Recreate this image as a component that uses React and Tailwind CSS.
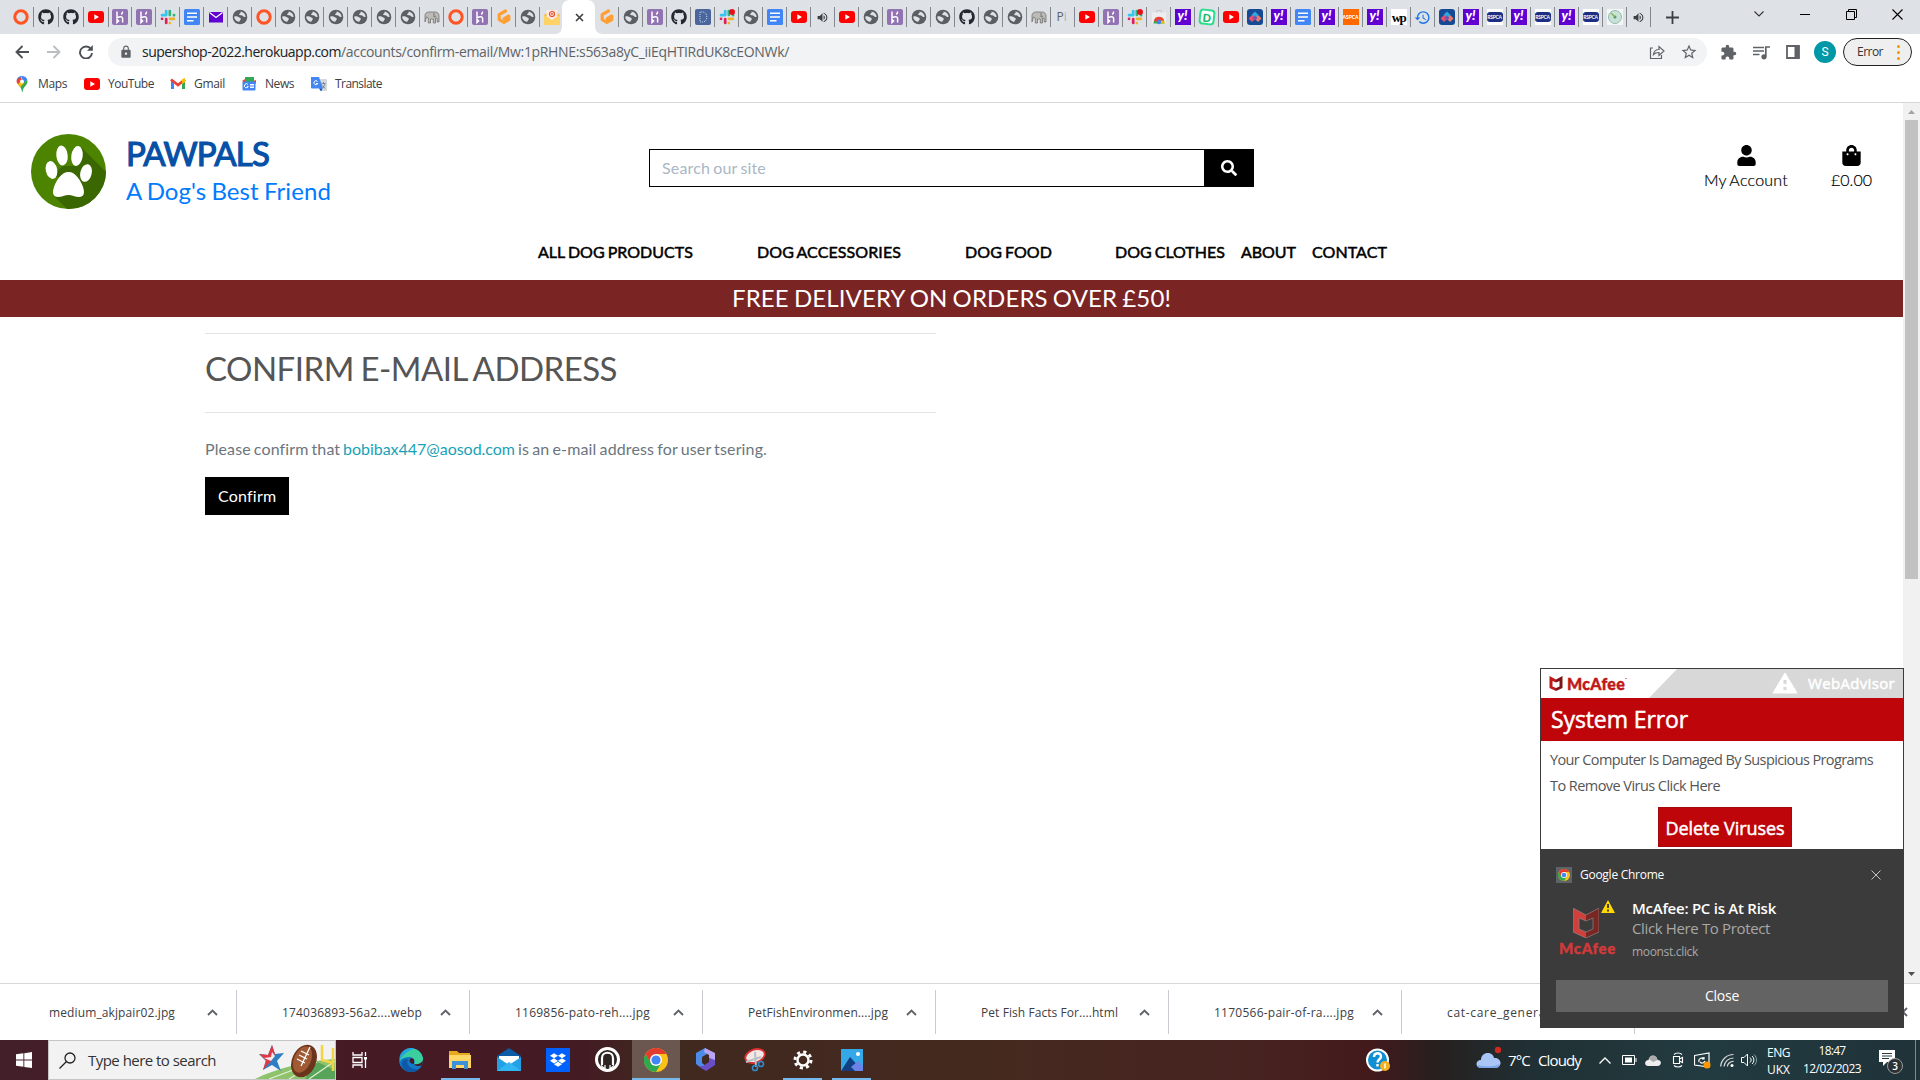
import React, { useLayoutEffect, useRef, useState } from "react";
import { FaGithub, FaUser, FaShoppingBag, FaSearch, FaDropbox } from "react-icons/fa";
import { MdLock, MdExtension, MdStarBorder, MdVolumeUp, MdHistory } from "react-icons/md";

/* Text spread over a fixed width by adjusting its letter spacing. */
function Fit({ w, className = "", children }) {
  const ref = useRef(null);
  const [ls, setLs] = useState(0);
  useLayoutEffect(() => {
    const natural = ref.current.getBoundingClientRect().width;
    setLs((w - natural) / ref.current.textContent.length);
  }, [w]);
  return (
    <span className={"block shrink-0 whitespace-nowrap " + className} style={{ width: w }}>
      <span ref={ref} style={{ letterSpacing: ls }}>{children}</span>
    </span>
  );
}

const Svg = ({ s = 16, w, h, vb = "0 0 16 16", className = "", children }) => (
  <svg width={w || s} height={h || s} viewBox={vb} fill="none" className={"shrink-0 " + className}>{children}</svg>
);

/* ---------- Favicons ---------- */
const Ring = () => <Svg><circle cx="8" cy="8" r="6.200" stroke="#ff5423" strokeWidth="3" /></Svg>;
const Git = () => <FaGithub size={16} color="#24292f" />;
const Tube = () => <Svg><rect x="0" y="2" width="16" height="12" rx="3" fill="#f00" /><path d="M6.3 5.3v5.4L11 8z" fill="#fff" /></Svg>;
const Heroku = () => (
  <Svg><rect width="16" height="16" rx="2" fill="#9173b4" /><path d="M5 2.500v6.200c3-1.300 5.600-1.400 5.600.6v4.200M5 10.600v3l1.600-1.500zM10.600 2.500c0 1.300-.5 2.200-1.300 3" stroke="#fff" strokeWidth="1.500" /></Svg>
);
const Slack = ({ dot }) => (
  <Svg>
    <g strokeWidth="2.700" strokeLinecap="round">
      <path d="M6.200 2v4M2 6.200h4" stroke="#36c5f0" /><path d="M9.800 2v4M14 6.200h.1" stroke="#2eb67d" />
      <path d="M10 9.800h4M9.800 14v.1" stroke="#ecb22e" /><path d="M6.200 10v4M2 9.800h.1" stroke="#e01e5a" />
    </g>
    {dot && <circle cx="13" cy="3" r="3" fill="#e8101c" />}
  </Svg>
);
const Doc = () => <Svg><rect width="16" height="16" rx="1.500" fill="#4285f4" /><path d="M3 4.200h10M3 8h10M3 11.800h6.500" stroke="#fff" strokeWidth="1.500" /></Svg>;
const Mail = () => <Svg><rect x="1" y="3" width="14" height="10.500" fill="#5f01d1" /><path d="M1.500 3.500 8 8.500l6.500-5" stroke="#fff" strokeWidth="1.300" /></Svg>;
const Globe = () => (
  <Svg>
    <circle cx="8" cy="8" r="7.300" fill="#5b5f64" />
    <path d="M2.300 7.600c1.500-.6 3.300-.4 4.200.4.800.8 2.300.6 2.300 2 0 1.300-1.300 1.300-1.600 2.900C4.500 12.500 2 10.400 2.300 7.600zM8.200 2.600c1 .8.300 1.700-.8 2.200-.9.500.2 1.600 1.500 1.500 1.500-.1 2.200 1.100 3.200 1.600.6.300 1.300.1 1.500-.4C13.200 4.700 11 2.700 8.200 2.600z" fill="#dee1e6" />
  </Svg>
);
const Elephant = () => (
  <Svg><path d="M1 13V7c0-2.500 1.500-4 4-4h6c2.500 0 4 1.500 4 4v6h-1.800V9.500L11.500 9v5H9.300v-4H6.500v4H4.300V9L2.500 8z" fill="#bcbbb7" stroke="#74726e" strokeWidth=".8" /><path d="M10 4v4l2-1" stroke="#666" strokeWidth=".8" /></Svg>
);
/* Hexagonal G mark. */
const Gitpod = () => <Svg><path d="M9.500 2 3.200 5.600v5L8 13.300l4.800-2.700V7L8.300 9.600" stroke="#ff9f33" strokeWidth="3.200" strokeLinecap="round" strokeLinejoin="round" /></Svg>;
const Envelope = () => (
  <Svg><path d="M0 6 8 .5 16 6v9.500H0z" fill="#f3b63c" /><path d="M2.500 1h11v8L8 12 2.500 9z" fill="#ffe9e0" /><circle cx="8" cy="5" r="2.500" stroke="#e5502f" strokeWidth="1.200" /><circle cx="8" cy="5" r=".9" fill="#e5502f" /><path d="M0 6v10h16V6l-8 5z" fill="#fdd367" /></Svg>
);
const DBlue = () => <Svg><rect width="16" height="16" rx="2" fill="#4a669c" /><path d="M5 3v10h3c5 0 5-10 0-10z" stroke="#c9d6ee" strokeDasharray="1 1" /></Svg>;
const Store = () => <Svg><path d="M1 3.500h14v11H1z" fill="#eceef0" /><path d="M5.500 3.500v-2h5v2" stroke="#c6c9cc" /><path d="M2.500 14.500a5.500 5.500 0 0 1 11 0z" fill="#34a853" /><path d="M2.800 12a5.300 5.300 0 0 1 10.400 0l-5.200 1z" fill="#ea4335" /><path d="M10 11.500l3.300.5.200 2.500H9z" fill="#fbbc04" /><circle cx="8" cy="13" r="2.200" fill="#4285f4" /></Svg>;
const Yahoo = () => <span className="flex h-4 w-4 items-center justify-center bg-[#6001d2] pb-1 font-['Lato'] text-[13px] leading-none font-black text-white italic">y!</span>;
const DGreen = () => <span className="flex h-4 w-4 rotate-6 items-center justify-center rounded-[4px] border-2 border-[#2fdc8f] bg-white font-['Lato'] text-[11px] leading-none font-black text-[#12b76a]">D</span>;
const Diamonds = () => <Svg><rect width="16" height="16" rx="3" fill="#164a94" /><path d="m8 2.500 3.500 3.500L8 9.500 4.500 6z" fill="#2aa9e0" /><path d="m5 6 3.500 3.500L5 13 1.500 9.500z" fill="#e84d6b" /><path d="m11 6 3.500 3.500L11 13 7.500 9.500z" fill="#f07865" /><path d="m8 6.500 2.500 2.500L8 11.500 5.500 9z" fill="#6b57b8" /></Svg>;
const Aspca = () => <span className="flex h-4 w-4 items-center justify-center bg-[#ff6a00] font-['Lato'] text-[5px] leading-none font-black text-white">ASPCA</span>;
const Wp = () => <span className="flex h-4 w-4 items-center justify-center overflow-hidden bg-white font-['Liberation_Serif'] text-[13px] leading-none font-bold tracking-[-1.500px] text-black">wp</span>;
const Hist = () => <MdHistory size={17} color="#1a73e8" />;
const Rspca = () => <span className="flex h-4 w-4 items-center bg-white"><span className="flex h-2.5 w-4 items-center justify-center overflow-hidden rounded-[3px] bg-[#1d2f83] font-['Lato'] text-[5px] leading-none font-bold tracking-[-0.300px] text-white">RSPCA</span></span>;
const Disc = () => <Svg><rect width="16" height="16" fill="#f4f7f5" /><circle cx="8" cy="8" r="6.500" fill="#c8e3d6" stroke="#96b9b4" /><circle cx="8" cy="8" r="1.500" fill="#4f8f86" /><path d="M8 8 4 4" stroke="#86b848" strokeWidth="1.500" /></Svg>;
const Vol = () => <MdVolumeUp size={13} color="#3c4043" />;
const Pi = () => <span className="w-3 overflow-hidden font-['Open_Sans'] text-xs whitespace-nowrap text-[#5f6368]">P<span className="text-[#b0b3b6]">i</span></span>;
const SlackDot = () => <Slack dot />;

const firstTabs = [Ring, Git, Git, Tube];
const leftTabs = [Heroku, Heroku, Slack, Doc, Mail, Globe, Ring, Globe, Globe, Globe, Globe, Globe, Globe, Elephant, Ring, Heroku, Gitpod, Globe, Envelope];
const rightTabs = [Gitpod, Globe, Heroku, Git, DBlue, SlackDot, Globe, Doc, Tube, Vol, Tube, Globe, Heroku, Globe, Globe, Git, Globe, Globe, Elephant, Pi, Tube, Heroku, SlackDot, Store, Yahoo, DGreen, Tube, Diamonds, Yahoo, Doc, Yahoo, Aspca, Yahoo, Wp, Hist, Diamonds, Yahoo, Rspca, Yahoo, Rspca, Yahoo, Rspca, Disc, Vol];

function Tab({ I, wide, last }) {
  return (
    <div className={"flex h-full shrink-0 items-center justify-center " + (wide ? "w-[25px]" : "w-6")}>
      <span className="flex flex-1 justify-center">{<I />}</span>
      <span className={"h-5 w-px " + (last ? "bg-transparent" : "bg-[#85888d]")} />
    </div>
  );
}

function TabStrip() {
  return (
    <div className="flex h-[34px] items-stretch bg-[#dee1e6]">
      <div className="flex h-[34px] w-[564px] shrink-0 pl-[9px]">
        {firstTabs.map((I, i) => <Tab key={i} I={I} wide />)}
        <div className="-ml-px flex">{leftTabs.map((I, i) => <Tab key={i} I={I} last={i === 18} />)}</div>
      </div>
      <div className="relative flex w-[31px] shrink-0 items-center justify-center">
        <svg width="48" height="34" viewBox="0 0 48 34" className="absolute top-0 -left-[9px]"><path d="M0 34c5 0 7-3 7-8V8c0-5 3-8 8-8h17c5 0 8 3 8 8v18c0 5 3 8 8 8z" fill="#fff" /></svg>
        <Svg s={9} vb="0 0 9 9" className="relative"><path d="m1 1 7 7M8 1 1 8" stroke="#3c4043" strokeWidth="1.600" /></Svg>
      </div>
      <div className="flex h-[34px] w-[1056px] shrink-0">{rightTabs.map((I, i) => <Tab key={i} I={I} />)}</div>
      <div className="flex flex-1 items-center">
        <Svg s={13} vb="0 0 13 13" className="ml-[15px]"><path d="M6.500 0v13M0 6.500h13" stroke="#3c4043" strokeWidth="1.800" /></Svg>
        <div className="ml-[75px] flex flex-1 items-center pb-1.5">
          <Svg w={10} h={6} vb="0 0 10 6"><path d="m.5.500 4.500 4.500L9.500.5" stroke="#333" strokeWidth="1.100" /></Svg>
          <span className="ml-[36px] h-px w-2.5 bg-black" />
          <Svg s={11} vb="0 0 11 11" className="ml-9"><path d="M.5 2.500h8v8h-8zM2.500 2.500v-2h8v8h-2" stroke="#000" /></Svg>
          <Svg s={11} vb="0 0 11 11" className="ml-[35px]"><path d="m.5.500 10 10m0-10-10 10" stroke="#000" strokeWidth="1.100" /></Svg>
        </div>
      </div>
    </div>
  );
}

function Toolbar() {
  return (
    <div className="flex h-9 items-center bg-white">
      <Svg s={14} vb="0 0 14 14" className="ml-[15px]"><path d="M14 7H1.500M7.500 1l-6 6 6 6" stroke="#4d5156" strokeWidth="1.900" /></Svg>
      <Svg s={14} vb="0 0 14 14" className="ml-[18px]"><path d="M0 7h12.500M6.500 1l6 6-6 6" stroke="#bcbec1" strokeWidth="1.900" /></Svg>
      <Svg s={14} vb="0 0 14 14" className="ml-[18px]"><path d="M12 4.200A6 6 0 1 0 13 8" stroke="#4d5156" strokeWidth="1.900" /><path d="M13.800 0v5.800H8z" fill="#4d5156" /></Svg>
      <div className="ml-[15px] flex h-7 w-[1599px] items-center rounded-full bg-[#f1f3f4]">
        <MdLock size={14} color="#5f6368" className="ml-[11px]" />
        <Fit w={199} className="ml-[9px] font-['Open_Sans'] text-sm text-[#202124]">supershop-2022.herokuapp.com</Fit>
        <Fit w={448} className="font-['Open_Sans'] text-sm text-[#5f6368]">/accounts/confirm-email/Mw:1pRHNE:s563a8yC_iiEqHTIRdUK8cEONWk/</Fit>
        <Svg s={16} className="ml-auto"><path d="M4 4H1.500v10.500h11V11M4.500 10.500c.5-3.500 2.500-5 5.500-5V2.500L15 7l-5 4.500V8.500c-2.500 0-4 .5-5.500 2z" stroke="#5f6368" strokeWidth="1.200" /></Svg>
        <MdStarBorder size={18} color="#5f6368" className="mr-[9px] ml-[15px]" />
      </div>
      <MdExtension size={17} color="#5f6368" className="ml-[13px]" />
      <Svg w={17} h={15} vb="0 0 17 15" className="ml-4"><path d="M0 2.500h11M0 6h11M0 9.500h6.500M12.800 11.500V2H17" stroke="#5f6368" strokeWidth="1.700" /><circle cx="11" cy="11.800" r="2.600" fill="#5f6368" /></Svg>
      <Svg s={14} vb="0 0 14 14" className="ml-4"><path d="M1 1h12v12H1z" stroke="#5f6368" strokeWidth="1.800" /><path d="M8.500 1H13v12H8.500z" fill="#5f6368" /></Svg>
      <span className="ml-3.5 flex h-[22px] w-[22px] items-center justify-center rounded-full bg-[#0097a7] font-['Roboto'] text-xs text-white">S</span>
      <div className="ml-[7px] flex h-7 w-[69px] items-center rounded-full border border-[#202124] bg-[#efefef]">
        <Fit w={26} className="ml-[13px] font-['Open_Sans'] text-xs text-[#333]">Error</Fit>
        <span className="ml-[14px] flex flex-col gap-[3px]">{[0, 1, 2].map((i) => <i key={i} className="h-[3px] w-[3px] rounded-full bg-[#f29900]" />)}</span>
      </div>
    </div>
  );
}

function Bookmarks() {
  const label = "font-['Open_Sans'] text-xs text-[#3c4043]";
  return (
    <div className="flex h-[33px] items-center border-b border-[#d5d7da] bg-white pb-1">
      <Svg className="ml-[14px]"><path d="M8 0a5.500 5.500 0 0 0-5.300 4L6 7z" fill="#4285f4" /><path d="M8 0a5.500 5.500 0 0 1 5.300 4L8 8z" fill="#4285f4" /><path d="M2.700 4C2.300 6 3 7.500 4.500 9L9 4.500 6 1z" fill="#ea4335" /><path d="M13.300 4C14.500 9 9 10 8.500 16H8C7.500 12 6 10.500 4.500 9z" fill="#34a853" /><path d="M4 8l3-3 3 2-4 4.500z" fill="#fbbc04" /><circle cx="8" cy="5.500" r="2" fill="#fff" /></Svg>
      <Fit w={29} className={"ml-2 " + label}>Maps</Fit>
      <span className="ml-[17px]"><Tube /></span>
      <Fit w={46} className={"ml-2 " + label}>YouTube</Fit>
      <Svg className="ml-4"><path d="M1 3v10h3V7.500z" fill="#4285f4" /><path d="M15 3v10h-3V7.500z" fill="#34a853" /><path d="M1 3.500 8 9l7-5.500" stroke="#ea4335" strokeWidth="2.800" /><path d="M12 3.500 15 2v4l-3 2z" fill="#fbbc04" /></Svg>
      <Fit w={31} className={"ml-2 " + label}>Gmail</Fit>
      <Svg className="ml-4"><path d="M4 1h9v5H4z" fill="#34a853" /><path d="m1 5 3-2v4zM15 4v4l-3-3z" fill="#ea4335" /><rect x="1.500" y="5.500" width="13" height="9" rx="1" fill="#4285f4" /><path d="M7 8.500a2 2 0 1 0 .3 2H6M9 8.500h4M9 10h4M9 11.500h4" stroke="#fff" /></Svg>
      <Fit w={29} className={"ml-2 " + label}>News</Fit>
      <Svg className="ml-[17px]"><path d="M6 3h9a1 1 0 0 1 1 1v11H10z" fill="#d4d7db" /><path d="M0 1h8l4 11.500H1a1 1 0 0 1-1-1z" fill="#4285f4" /><path d="M6.500 5.500a2 2 0 1 0 .3 2H5" stroke="#fff" /><path d="M10.500 7.500h4M12.500 6v1.500M14 8l-2 4M11.500 9.500l2.500 3" stroke="#788088" strokeWidth=".9" /><path d="m8 12.500 2 3 1.500-3z" fill="#174ea6" /></Svg>
      <Fit w={47} className={"ml-2 " + label}>Translate</Fit>
    </div>
  );
}

function PawLogo() {
  return (
    <svg width="75" height="75" viewBox="0 0 75 75" className="shrink-0">
      <defs><clipPath id="disc"><circle cx="37.500" cy="37.500" r="37.500" /></clipPath></defs>
      <g clipPath="url(#disc)">
        <rect width="75" height="75" fill="#4c8400" />
        <path d="M50 13 80 43v42H46L22 61l12-19-16 2L32 32l14 0z" fill="#3a6700" />
      </g>
      <g fill="#fff">
        <ellipse cx="31" cy="21.500" rx="5.700" ry="10" transform="rotate(-6 31 21.500)" />
        <ellipse cx="46" cy="22" rx="5.700" ry="10" transform="rotate(8 46 22)" />
        <ellipse cx="20.500" cy="36" rx="5.700" ry="9" transform="rotate(-12 20.500 36)" />
        <ellipse cx="55" cy="39" rx="5.700" ry="9" transform="rotate(14 55 39)" />
        <path d="M37.500 38c-7 0-12 8-14.500 15-2 6-1 10 4 10 4 0 7-2 10.500-2s6.500 2 10.500 2c5 0 6-4 4-10-2.500-7-7.500-15-14.500-15z" />
      </g>
    </svg>
  );
}

const navItems = [["ALL DOG PRODUCTS", 155, "ml-[538px]"], ["DOG ACCESSORIES", 144, "ml-16"], ["DOG FOOD", 87, "ml-16"], ["DOG CLOTHES", 110, "ml-[63px]"], ["ABOUT", 55, "ml-4"], ["CONTACT", 75, "ml-4"]];

function Shop() {
  return (
    <main className="w-[1903px] shrink-0 bg-white font-['Lato'] [word-spacing:-0.07em]">
      <header className="flex h-[177px] flex-col">
        <div className="flex h-[137px] items-start">
          <div className="mt-[31px] ml-[31px]"><PawLogo /></div>
          <div className="mt-[29px] ml-5 w-[523px]">
            <Fit w={143} className="text-[33px] leading-[42px] font-normal text-[#0650a6] [-webkit-text-stroke:1.200px_#0650a6]">PAWPALS</Fit>
            <Fit w={205} className="text-2xl leading-[34px] text-[#007bff]">A Dog's Best Friend</Fit>
          </div>
          <div className="mt-[46px] flex h-[38px] w-[605px] border border-black">
            <Fit w={104} className="flex-1 pl-3 text-base leading-9 text-[#aab7c4]">Search our site</Fit>
            <span className="ml-auto flex w-[49px] items-center justify-center bg-black"><FaSearch size={16} color="#fff" /></span>
          </div>
          <div className="mt-[42px] ml-[450px] flex w-[84px] flex-col items-center">
            <FaUser size={21} /><Fit w={84} className="mt-0.5 text-base leading-6 font-light text-black [-webkit-text-stroke:0.200px_#000]">My Account</Fit>
          </div>
          <div className="mt-[42px] ml-[43px] flex w-[41px] flex-col items-center">
            <FaShoppingBag size={21} /><Fit w={41} className="mt-0.5 text-base leading-6 font-light text-black [-webkit-text-stroke:0.200px_#000]">£0.00</Fit>
          </div>
        </div>
        <nav className="flex items-center">
          {navItems.map(([t, w, m]) => <Fit key={t} w={w} className={"text-base leading-6 text-black [-webkit-text-stroke:0.500px_#000] " + m}>{t}</Fit>)}
        </nav>
      </header>
      <div className="flex h-[37px] items-center bg-[#7a2424] pb-0.5 pl-[732px]">
        <Fit w={439} className="text-2xl leading-[35px] text-white">FREE DELIVERY ON ORDERS OVER £50!</Fit>
      </div>
      <section className="ml-[205px] w-[731px] pt-4">
        <hr className="border-[#e2e3e4]" />
        <div className="flex h-[78px] items-center pb-[11px]"><Fit w={412} className="text-[33px] leading-10 text-[#555]">CONFIRM E-MAIL ADDRESS</Fit></div>
        <hr className="border-[#e2e3e4]" />
        <div className="mt-6 flex text-base leading-6 text-[#6c757d]">
          <Fit w={138}>Please confirm that&nbsp;</Fit>
          <Fit w={172} className="text-[#17a2b8]">bobibax447@aosod.com</Fit>
          <Fit w={252}>&nbsp;is an e-mail address for user tsering.</Fit>
        </div>
        <button className="mt-4 flex h-[38px] w-[84px] items-center justify-center bg-black text-base text-white"><Fit w={58}>Confirm</Fit></button>
      </section>
    </main>
  );
}

function Scrollbar() {
  return (
    <div className="flex w-[17px] flex-col items-center bg-[#f1f1f1]">
      <Svg w={7} h={4} vb="0 0 7 4" className="mt-[7px]"><path d="m0 4 3.500-4L7 4z" fill="#a3a3a3" /></Svg>
      <div className="mt-1.5 h-[459px] w-[13px] bg-[#c1c1c1]" />
      <Svg w={7} h={4} vb="0 0 7 4" className="mt-auto mb-[7px]"><path d="m0 0 3.500 4L7 0z" fill="#505050" /></Svg>
    </div>
  );
}

const files = [["medium_akjpair02.jpg", 126], ["174036893-56a2....webp", 140], ["1169856-pato-reh....jpg", 135], ["PetFishEnvironmen....jpg", 140], ["Pet Fish Facts For....html", 137], ["1170566-pair-of-ra....jpg", 140], ["cat-care_general....jpg", 137]];

function Downloads() {
  return (
    <div className="flex h-[57px] items-center border-t border-[#d5d7da] bg-white pl-1">
      {files.map(([f, w]) => (
        <div key={f} className="flex h-11 w-[233px] shrink-0 items-center border-r border-[#c9ccd0]">
          <div className="ml-[45px] w-[158px] pt-px"><Fit w={w} className="font-['Open_Sans'] text-xs text-[#3c4043]">{f}</Fit></div>
          <Svg w={11} h={7} vb="0 0 11 7"><path d="m1 6 4.500-4.500L10 6" stroke="#5f6368" strokeWidth="1.900" /></Svg>
        </div>
      ))}
      <Svg s={10} vb="0 0 10 10" className="ml-auto mr-3"><path d="m1 1 8 8M9 1 1 9" stroke="#5f6368" strokeWidth="1.800" /></Svg>
    </div>
  );
}

const Chrome = ({ s }) => (
  <Svg s={s} vb="0 0 24 24">
    <circle cx="12" cy="12" r="12" fill="#fbc116" /><path d="M1.600 6A12 12 0 0 1 22.400 6H12z" fill="#e33b2e" />
    <path d="M1.600 6a12 12 0 0 0 10.400 18l5.200-9H6.800z" fill="#2da94f" /><path d="M1.600 6h10.400L6.800 15z" fill="#e33b2e" /><circle cx="12" cy="12" r="6" fill="#fff" /><circle cx="12" cy="12" r="4.600" fill="#4285f4" />
  </Svg>
);
/* Open-front shield: bright left half, shaded right half. */
const Shield = ({ w, h, dark }) => (
  <Svg w={w} h={h} vb="0 0 26 30">
    <path d="M0 0 13 7v6L6 10v11l7 3v6L0 24z" fill={dark ? "#d03f3c" : "#c01818"} />
    <path d="M26 0 13 7v6l7-3v11l-7 3v6l13-6z" fill={dark ? "#7a2623" : "#7c1616"} />
    {dark && <path d="M0 0 13 7 26 0v24l-13 6-13-6zM6 10l7 3 7-3v11l-7 3-7-3z" stroke="#8f8583" strokeWidth=".7" />}
  </Svg>
);

function Toast() {
  const bold = " text-white [-webkit-text-stroke:0.500px_#fff]";
  return (
    <aside className="absolute top-[668px] left-[1540px] flex h-[360px] w-[364px] flex-col bg-[#3b3b3b] font-['Open_Sans']">
      <div className="mx-px mt-px flex h-[180px] flex-col bg-white">
        <div className="flex h-[29px] items-center">
          <span className="ml-2"><Shield w={14} h={15} /></span>
          <span className="ml-1 flex items-start"><Fit w={58} className="font-['Lato'] text-[16px] leading-5 font-black text-[#c01818] [-webkit-text-stroke:0.400px_#c01818]">McAfee</Fit><i className="mt-1 h-px w-0.5 bg-[#d88]" /></span>
          <div className="relative ml-auto flex h-[29px] w-[254px] items-center">
            <svg width="254" height="29" viewBox="0 0 254 29" className="absolute inset-0"><path d="M0 29 28 0h226v29z" fill="#d8d8d8" /><path d="m136 4 12 20h-24z" fill="#fff" stroke="#fff" strokeLinejoin="round" /><path d="M136 11v4m0 3v3" stroke="#d8d8d8" strokeWidth="3" /></svg>
            <Fit w={87} className={"relative ml-[159px] pb-px text-[15px] leading-5" + bold}>WebAdvisor</Fit>
          </div>
        </div>
        <div className="flex h-[43px] items-center bg-[#be0509] pb-0.5 pl-2.5"><Fit w={137} className={"text-[23px] leading-8" + bold}>System Error</Fit></div>
        <Fit w={323} className="mt-[6px] ml-[9px] text-[14.500px] leading-[26px] text-[#555]">Your Computer Is Damaged By Suspicious Programs</Fit>
        <Fit w={170} className="ml-[9px] text-[14.500px] leading-[26px] text-[#555]">To Remove Virus Click Here</Fit>
        <div className="mt-2 ml-[117px] flex h-10 w-[134px] items-center justify-center border border-[#a30a0d] bg-[#be0509] pt-0.5"><Fit w={119} className={"text-lg leading-6" + bold}>Delete Viruses</Fit></div>
      </div>
      <div className="flex h-[51px] items-center px-4">
        <span className="flex h-4 w-4 items-center justify-center bg-[#5f6368]"><Chrome s={12} /></span>
        <Fit w={84} className="ml-2 text-xs text-white">Google Chrome</Fit>
        <Svg s={10} vb="0 0 10 10" className="mr-[7px] ml-auto"><path d="m.5.500 9 9m0-9-9 9" stroke="#c5c5c5" /></Svg>
      </div>
      <div className="flex h-[82px] pl-[19px]">
        <div className="relative mt-2 w-[73px] pl-[14px]">
          <Shield w={26} h={30} dark />
          <Fit w={57} className="absolute top-[30px] left-0 font-['Lato'] text-[15px] leading-5 font-black text-[#d03a3a] [-webkit-text-stroke:0.400px_#d03a3a]">McAfee</Fit>
          <Svg w={14} h={13} vb="0 0 14 13" className="absolute -top-2 left-[42px]"><path d="m7 0 7 13H0z" fill="#ffd800" /><path d="M7 4v4m0 1.500v2" stroke="#333" strokeWidth="1.800" /></Svg>
        </div>
        <div className="-mt-0.5">
          <Fit w={144} className="text-[15px] leading-5 font-semibold text-white">McAfee: PC is At Risk</Fit>
          <Fit w={138} className="text-[15px] leading-5 text-[#a8a8a8]">Click Here To Protect</Fit>
          <Fit w={66} className="mt-[6px] text-xs leading-4 text-[#a8a8a8]">moonst.click</Fit>
        </div>
      </div>
      <div className="mx-4 -mt-0.5 flex h-8 items-center justify-center bg-[#636363] text-sm text-white"><Fit w={34}>Close</Fit></div>
    </aside>
  );
}

function TaskItem({ w = "w-[49px]", on, active, children }) {
  return (
    <div className={"flex h-10 shrink-0 flex-col items-center " + w + (active ? " bg-[#6b5650]" : "")}>
      <span className="flex h-[38px] items-center pt-px">{children}</span>
      {on && <span className={"h-0.5 bg-[#76b9ed] " + (active ? "w-full" : "w-[39px]")} />}
    </div>
  );
}

function Taskbar() {
  const t = "font-['Open_Sans'] text-white";
  return (
    <div className="flex h-10 items-center bg-[linear-gradient(90deg,#431f2a_0px,#461a25_400px,#431b23_580px,#40291f_660px,#45291f_1000px,#472320_1250px,#43191c_1370px,#26201f_1440px,#203034_1530px,#223b40_1700px,#1f3339_1920px)]">
      <Svg className="ml-4"><path d="M0 2.300 7.400 1.300v6.300H0zM8.300 1.200 16 0v7.600H8.300zM0 8.500h7.400v6.300L0 13.800zM8.300 8.500H16V16l-7.700-1.100z" fill="#fff" /></Svg>
      <div className="ml-4 flex h-10 w-[288px] shrink-0 items-center overflow-hidden border border-[#c5c5c5] bg-[#f2f2f2]">
        <Svg s={17} vb="0 0 17 17" className="ml-2.5"><circle cx="11" cy="6" r="5" stroke="#222" strokeWidth="1.300" /><path d="m7.500 9.500-7 7" stroke="#222" strokeWidth="1.300" /></Svg>
        <Fit w={128} className="ml-3 font-['Open_Sans'] text-[15px] text-[#333]">Type here to search</Fit>
        <svg width="80" height="38" viewBox="0 0 80 38" fill="none" className="ml-auto shrink-0">
          <path d="M0 38C20 28 50 20 80 18v20z" fill="#8fc36b" /><path d="m60 20 20 9v9H50z" fill="#58a559" /><path d="m14 38 40-15M34 38l28-17M54 38l26-18" stroke="#e2f0d5" strokeWidth="1.200" />
          <path d="m17 4 3 9 9-1-7 8 4 10-9-6-9 5 3-9-7-7 9 1z" fill="#2d7fc4" /><path d="m17 4 3 9-3 6-9 10 3-10-7-6 9 1z" fill="#df3a44" /><path d="m17 11 3 4-4 5-7-3 7-1z" fill="#f3eaf0" />
          <path d="M67 4v15l11 3M78 7v23" stroke="#f3d443" strokeWidth="2.500" />
          <ellipse cx="49" cy="20" rx="12" ry="17" transform="rotate(24 49 20)" fill="#6b341d" /><ellipse cx="47.500" cy="18.500" rx="8.500" ry="14" transform="rotate(24 47.500 18.500)" fill="#a15b34" />
          <path d="m55 6-9 19m0-15 8 4m-10 0 8 4m-10 0 8 4" stroke="#fff" strokeWidth="1.300" />
        </svg>
      </div>
      <TaskItem w="w-[50px] pr-0.5"><Svg><path d="M1 0v3h9V0M1 16v-3h9v3M1 5.500h9v5H1zM13.500 0v4M13.500 7v9" stroke="#fff" strokeWidth="1.300" /><path d="M12 5h3v2.500h-3z" fill="#fff" /></Svg></TaskItem>
      <TaskItem w="w-[50px]"><Svg s={24} vb="0 0 24 24"><circle cx="12" cy="12" r="12" fill="#1278c8" /><path d="M1 9C4-2 21-3 24 10c1 6-6 8-9 6 2-2 0-7-5-7-4 0-7 1-9 4z" fill="#3bcf9e" /><path d="M1 9C3 2 9-1 15 .5 10 3 5 5 1 12z" fill="#23a5dc" /><path d="M9 11c-3 5 3 12 11 10-4 4-12 4-16-1-3-4-1-10 5-9z" fill="#0d58a8" /><path d="M24 12c-2 4-6 5-9 4 1 2 5 3 8 1z" fill="#431a25" /><path d="M15 16c-4 0-5-3-4-5 2-2 5 0 4 2z" fill="#431a25" /></Svg></TaskItem>
      <TaskItem w="w-[48px]" on><Svg w={22} h={20} vb="0 0 22 20"><path d="M0 1h8l2 2h11v15H0z" fill="#e8a921" /><path d="M0 5h22v13H0z" fill="#ffd767" /><path d="M3 11h16v8h-4v-4H7v4H3z" fill="#3d91d8" /></Svg></TaskItem>
      <TaskItem><Svg s={24} vb="0 0 24 24"><path d="M0 8 12 0l12 8v14H0z" fill="#0a5ba8" /><path d="M2 8h20v8H2z" fill="#fff" /><path d="M0 9 12 17 24 9v14H0z" fill="#22a1e6" /><path d="m0 23 12-9 12 9z" fill="#32b6f3" /></Svg></TaskItem>
      <TaskItem><span className="flex h-6 w-6 items-center justify-center bg-[#0061fe]"><FaDropbox size={16} color="#fff" /></span></TaskItem>
      <TaskItem w="w-[50px]"><Svg s={25} vb="0 0 25 25"><circle cx="12.500" cy="12.500" r="11" fill="#2c2422" stroke="#fff" strokeWidth="3" /><path d="M7 18v-7c0-7 11-7 11 0v7" stroke="#fff" strokeWidth="2.200" /><path d="M10.200 20.500v-6.500c0-3 4.600-3 4.600 0v6.500z" fill="#2c2422" /><path d="M6 18.500 10 22v-4M19 18.500 15 22v-4" stroke="#fff" strokeWidth="1.200" /></Svg></TaskItem>
      <TaskItem w="w-[48px]" on active><Chrome s={24} /></TaskItem>
      <TaskItem w="w-[50px]"><Svg s={23} vb="0 0 23 23"><path d="M11 0 2 5v11l7 5 3-3-4-3V9l5-3z" fill="#4d8be8" /><path d="m11 0 10 5v8l-6-3V7l-5-3z" fill="#b9a3f5" /><path d="M21 12v5l-9 6-8-5 5 0 6-4v-4z" fill="#6a4ec5" /></Svg></TaskItem>
      <TaskItem w="w-[48px]"><Svg s={24} vb="0 0 24 24"><ellipse cx="13" cy="8" rx="10" ry="6.500" transform="rotate(-20 13 8)" fill="#f4e7e7" stroke="#d33" strokeWidth="1.800" /><path d="m4 14 15-5M13 4l1 15" stroke="#b9bec7" strokeWidth="2" /><circle cx="13" cy="20" r="2.500" stroke="#3587c5" strokeWidth="1.700" /><circle cx="19" cy="16" r="2.500" stroke="#3587c5" strokeWidth="1.700" /></Svg></TaskItem>
      <TaskItem on><Svg s={20} vb="0 0 20 20"><circle cx="10" cy="10" r="5.500" stroke="#fff" strokeWidth="2.400" /><circle cx="10" cy="10" r="8" stroke="#fff" strokeWidth="3" strokeDasharray="3.140 3.140" /></Svg></TaskItem>
      <TaskItem on><Svg w={22} h={22} vb="0 0 22 22"><rect width="22" height="22" fill="#35a8e8" /><path d="M0 22 9 8l13 14z" fill="#123f82" /><path d="m10 18 7-6 5 5v5h-8z" fill="#6b83e9" /><circle cx="17" cy="5" r="2" fill="#fff" /></Svg></TaskItem>

      <Svg s={24} vb="0 0 24 24" className="ml-[490px]"><circle cx="11.500" cy="12" r="10.500" fill="#108fd2" stroke="#fff" strokeWidth="2" /><path d="M8 9c0-5 7-5 7-.5 0 3-3.500 2.500-3.500 6M11.500 16v2.500" stroke="#fff" strokeWidth="2.400" /><circle cx="19" cy="18" r="5" fill="#f5b11e" /><path d="M19 15.500v5" stroke="#fff" strokeWidth="1.500" /></Svg>
      <Svg w={25} h={24} vb="0 0 25 24" className="ml-[86px] -mt-1"><path d="M5 22c-6 0-6-8 0-8 0-9 12-9 13-2 8-1 9 10 1 10z" fill="#a9c6f6" /><path d="M2 19c5 2 17 2 22-1-1 3-2 4-5 4H5c-2 0-3-1-3-3z" fill="#7da6ea" /><circle cx="22" cy="4" r="3.200" fill="#cf2a20" /></Svg>
      <div className="ml-[7px] w-[30px] pt-px"><Fit w={22} className={"text-[15px] " + t}>7°C</Fit></div>
      <Fit w={43} className={"pt-px text-[15px] " + t}>Cloudy</Fit>
      <Svg w={12} h={7} vb="0 0 12 7" className="ml-[18px]"><path d="m.5 6.500 5.500-5.500 5.500 5.500" stroke="#fff" strokeWidth="1.300" /></Svg>
      <Svg w={15} h={10} vb="0 0 15 10" className="ml-[11px]"><path d="M.5.500h12v9H.5zM14 3v4" stroke="#fff" /><path d="M3 2.500h7v5H3z" fill="#fff" /></Svg>
      <Svg w={16} h={11} vb="0 0 16 11" className="ml-2"><path d="M3.500 11c-5 0-4-6 0-6 1-6 8-6 9 0 5 0 4 6 0 6z" fill="#eee" /><path d="M4 4c2-5 8-4 8.500 1L8 7z" fill="#aaa" /></Svg>
      <Svg w={12} h={16} vb="0 0 12 16" className="ml-[11px]"><path d="M1.500 4.500h6v7h-6zM7.500 7l3-1.500v5L7.500 9M2 2.500c2-2 6-2 8 0M2 13.500c2 2 6 2 8 0" stroke="#fff" strokeWidth="1.100" /></Svg>
      <Svg w={18} h={17} vb="0 0 18 17" className="ml-2.5"><path d="M.5 3.500 15 1v14L.5 13zM5 10c-1-4 4-5 5-3m0-2v2H8m-2 3c2 2 4 1 5-1" stroke="#fff" strokeWidth="1.200" /><circle cx="13" cy="13" r="3.500" fill="#ff9800" /></Svg>
      <Svg w={14} h={14} vb="0 0 14 14" className="ml-2"><path d="M.7 13.500A12.800 12.800 0 0 1 13.500 1.500M4 13.500A9.500 9.500 0 0 1 13.500 5M7.300 13.500a6 6 0 0 1 6.200-5.200" stroke="#ddd" strokeWidth="1.200" /><circle cx="12" cy="12.500" r="1.500" fill="#fff" /></Svg>
      <Svg w={16} h={14} vb="0 0 16 14" className="ml-[7px]"><path d="M.5 4.500H3l3.500-3.500v12L3 9.500H.5zM9 4.500c1.500 1.500 1.500 3.500 0 5M11 3c2.500 2.500 2.500 5.500 0 8" stroke="#fff" /><path d="M13 1.500c3.500 3.500 3.500 7.500 0 11" stroke="#8aa" /></Svg>
      <div className={"ml-[10px] flex w-[23px] flex-col pt-px text-xs leading-[17px] " + t}><Fit w={23}>ENG</Fit><Fit w={23}>UKX</Fit></div>
      <div className={"ml-[13px] flex w-[58px] flex-col items-center text-xs leading-[18px] " + t}><Fit w={27}>18:47</Fit><Fit w={58}>12/02/2023</Fit></div>
      <div className="relative ml-[18px] mt-1 h-7 w-7">
        <Svg s={17} vb="0 0 17 17" className="mt-0.5"><path d="M0 0h16v12H8l-4 4v-4H0z" fill="#fff" /><path d="M3 3.500h10M3 6h10M3 8.500h7" stroke="#243a3f" strokeWidth="1.200" /></Svg>
        <span className="absolute top-[10px] left-2 flex h-4 w-4 items-center justify-center rounded-full border border-[#9a9a9a] bg-[#2c3133] font-['Open_Sans'] text-[10px] leading-none font-semibold text-white">3</span>
      </div>
      <span className="ml-auto mr-1 h-10 w-px bg-[#7c8b8e]" />
    </div>
  );
}

export default function App() {
  return (
    <div className="relative flex h-[1080px] w-[1920px] flex-col overflow-hidden bg-white">
      <TabStrip />
      <Toolbar />
      <Bookmarks />
      <div className="flex h-[880px] shrink-0"><Shop /><Scrollbar /></div>
      <Downloads />
      <Taskbar />
      <Toast />
    </div>
  );
}
